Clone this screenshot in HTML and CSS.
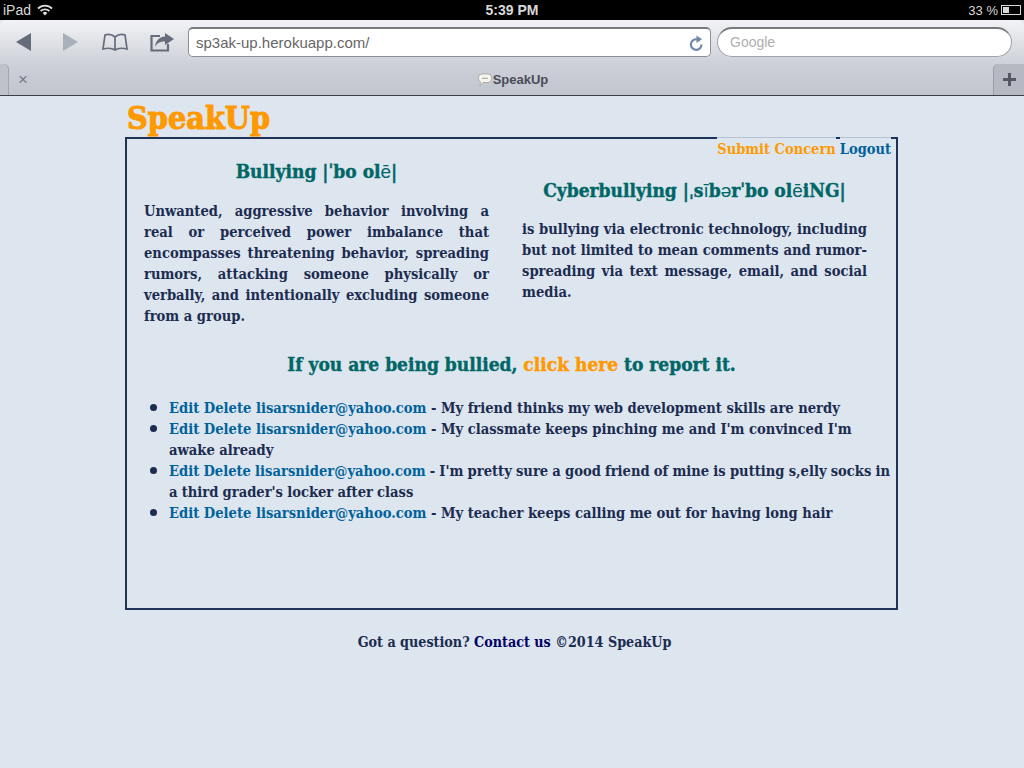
FILE: index.html
```html
<!DOCTYPE html>
<html lang="en">

<head>
    <meta charset="UTF-8">
    <meta name="viewport" content="width=device-width, initial-scale=1.0">
    <title>SpeakUp</title>

    <link rel="stylesheet" href="styles.css">
</head>

<body>

    <div class="status-bar">
        <div class="status-left">
            <span>iPad</span>
            <svg class="wifi" width="16" height="12" viewBox="0 0 16 12">
                <path d="M1 4.500 A10 10 0 0 1 15 4.500" fill="none" stroke="#ddd" stroke-width="1.800"/>
                <path d="M3.600 7 A6.500 6.500 0 0 1 12.400 7" fill="none" stroke="#ddd" stroke-width="1.800"/>
                <path d="M8 11.500 L5.700 9 A3.200 3.200 0 0 1 10.300 9 Z" fill="#ddd"/>
            </svg>
        </div>
        <div class="status-time">5:39 PM</div>
        <div class="status-right">
            <span>33 %</span>
            <span class="battery"><span class="battery-level"></span></span>
        </div>
    </div>

    <div class="toolbar">
        <svg class="tool-icon back" width="16" height="18" viewBox="0 0 16 18"><path d="M15 0 V18 L0 9 Z" fill="#656c7a"/></svg>
        <svg class="tool-icon forward" width="16" height="18" viewBox="0 0 16 18"><path d="M1 0 V18 L16 9 Z" fill="#a9afbb"/></svg>
        <svg class="tool-icon book" width="26" height="18" viewBox="0 0 26 18">
            <path d="M13 4 C10 1.500 6 1 3 2 L1 16 C5 15 10 15 13 17 C16 15 21 15 25 16 L23 2 C20 1 16 1.500 13 4 Z M13 4 V17" fill="none" stroke="#656c7a" stroke-width="1.700"/>
        </svg>
        <svg class="tool-icon share" width="24" height="19" viewBox="0 0 24 19">
            <path d="M10 3 H1.500 V17.500 H18 V11" fill="none" stroke="#656c7a" stroke-width="2.200"/>
            <path d="M15 0 L24 6 L15 12 V8.500 C10 8.500 7 10 5 14 C5.500 8 9 4 15 3.500 Z" fill="#656c7a"/>
        </svg>
        <div class="url-box">
            <span>sp3ak-up.herokuapp.com/</span>
            <svg width="15" height="16" viewBox="0 0 15 16">
                <path d="M12.500 9.500 A5.300 5.300 0 1 1 8 4.300" fill="none" stroke="#7088a6" stroke-width="2.200"/>
                <path d="M7.500 0.500 L13 4.300 L7.500 8 Z" fill="#7088a6"/>
            </svg>
        </div>
        <div class="search-box">Google</div>
    </div>

    <div class="tab-bar">
        <div class="tab-edge"></div>
        <span class="tab-close">&times;</span>
        <div class="tab-title">
            <svg width="14" height="14" viewBox="0 0 14 14">
                <path d="M4 1 H10 A3.500 3.500 0 0 1 13.500 4.500 V6 A3.500 3.500 0 0 1 10 9.500 H5 L2 12.500 L2.500 8.800 A3.500 3.500 0 0 1 .5 6 V4.500 A3.500 3.500 0 0 1 4 1 Z" fill="#f4f4f0" stroke="#9a9a92" stroke-width=".7"/>
                <path d="M4.500 5.300 H5.500 M6.500 5.300 H7.500 M8.500 5.300 H9.500" stroke="#444" stroke-width="1"/>
            </svg>
            <span>SpeakUp</span>
        </div>
        <div class="tab-add">
            <svg width="13" height="13" viewBox="0 0 13 13"><path d="M6.500 0 V13 M0 6.500 H13" stroke="#555863" stroke-width="3"/></svg>
        </div>
    </div>

    <div class="page">
        <h1 class="logo">SpeakUp</h1>

        <div class="box">
            <div class="nav">
                <a href="#" class="orange">Submit Concern</a>
                <a href="#">Logout</a>
            </div>

            <div class="definitions">
                <div class="definition">
                    <h2>Bullying |ˈbo ol<span class="thin">ē</span>|</h2>
                    <p>Unwanted, aggressive behavior involving a real or perceived power imbalance that encompasses threatening behavior, spreading rumors, attacking someone physically or verbally, and intentionally excluding someone from a group.</p>
                </div>
                <div class="definition second">
                    <h2>Cyberbullying |ˌs<span class="thin">ī</span>b<span class="thin">ə</span>rˈbo ol<span class="thin">ē</span>iNG|</h2>
                    <p>is bullying via electronic technology, including but not limited to mean comments and rumor-spreading via text message, email, and social media.</p>
                </div>
            </div>

            <h3 class="report">If you are being bullied, <a href="#" class="orange">click here</a> to report it.</h3>

            <ul class="concerns">
                <li><a href="#">Edit</a> <a href="#">Delete</a> <a href="#">lisarsnider@yahoo.com</a> - My friend thinks my web development skills are nerdy</li>
                <li><a href="#">Edit</a> <a href="#">Delete</a> <a href="#">lisarsnider@yahoo.com</a> - My classmate keeps pinching me and I'm convinced I'm awake already</li>
                <li class="tight"><a href="#">Edit</a> <a href="#">Delete</a> <a href="#">lisarsnider@yahoo.com</a> - I'm pretty sure a good friend of mine is putting s,elly socks in a third grader's locker after class</li>
                <li><a href="#">Edit</a> <a href="#">Delete</a> <a href="#">lisarsnider@yahoo.com</a> - My teacher keeps calling me out for having long hair</li>
            </ul>
        </div>

        <p class="footer">Got a question? <a href="#">Contact us</a> ©2014 SpeakUp</p>
    </div>

</body>

</html>
```

FILE: styles.css
```css
* {
    box-sizing: border-box;
}

body {
    margin: 0;
    height: 768px;
    overflow: hidden;
    background-color: #dde5ef;
    font-family: "DejaVu Serif Condensed", "DejaVu Serif", serif;
    font-size: 14.6px;
    font-weight: bold;
    color: #1b2c50;
}

a {
    color: #00629b;
    text-decoration: none;
}

a.orange {
    color: #ff9900;
}

/* ipad chrome */

.status-bar {
    display: grid;
    grid-template-columns: 1fr auto 1fr;
    align-items: center;
    height: 20px;
    padding: 0 3px 0 3px;
    background: #000;
    color: #d8d8d8;
    font-family: "Liberation Sans", sans-serif;
    font-size: 14px;
    font-weight: normal;
}

.status-left {
    display: flex;
    align-items: center;
    gap: 6px;
}

.status-time {
    font-weight: bold;
    font-size: 14px;
}

.status-right {
    display: flex;
    justify-content: flex-end;
    align-items: center;
    gap: 3px;
    font-size: 13px;
}

.battery {
    width: 20px;
    height: 10px;
    border: 1px solid #d8d8d8;
    padding: 1px;
}

.battery-level {
    display: block;
    width: 6px;
    height: 100%;
    background: #d8d8d8;
}

.toolbar {
    display: flex;
    align-items: center;
    height: 44px;
    padding: 0 12px 0 16px;
    border-radius: 6px 6px 0 0;
    background: linear-gradient(#f2f3f5, #cdd0d8);
}

.tool-icon {
    flex: none;
}

.forward {
    margin-left: 30px;
}

.book {
    margin-left: 24px;
}

.share {
    margin-left: 22px;
}

.url-box {
    display: flex;
    justify-content: space-between;
    align-items: center;
    width: 523px;
    height: 30px;
    margin-left: 14px;
    padding: 0 6px 0 7px;
    border: 1px solid #8a8e96;
    border-top: 2px solid #77797f;
    border-radius: 5px;
    background: #fff;
    color: #666;
    font-family: "Liberation Sans", sans-serif;
    font-size: 15px;
    font-weight: normal;
}

.search-box {
    width: 295px;
    height: 30px;
    margin-left: 6px;
    padding: 5px 12px;
    border: 1px solid #a0a3a9;
    border-top: 2px solid #77797f;
    border-radius: 15px;
    background: #fff;
    color: #b0b0b0;
    font-family: "Liberation Sans", sans-serif;
    font-size: 14px;
    font-weight: normal;
}

.tab-bar {
    display: flex;
    align-items: flex-end;
    height: 32px;
    background: linear-gradient(#cdd0d8, #c2c5ce);
    border-bottom: 1px solid #3d3f45;
}

.tab-edge {
    width: 9px;
    height: 31px;
    border-right: 1px solid #a2a5ad;
    border-top-right-radius: 5px;
    background: #bfc2ca;
}

.tab-close {
    align-self: center;
    margin-left: 9px;
    color: #777b85;
    font-family: "Liberation Sans", sans-serif;
    font-size: 17px;
    font-weight: normal;
}

.tab-title {
    flex: 1;
    display: flex;
    justify-content: center;
    align-items: center;
    gap: 1px;
    align-self: center;
    padding-left: 5px;
    color: #4a4c57;
    font-family: "Liberation Sans", sans-serif;
    font-size: 13px;
}

.tab-add {
    display: flex;
    justify-content: center;
    align-items: center;
    width: 31px;
    height: 31px;
    border-left: 1px solid #9a9da5;
    border-top-left-radius: 5px;
    background: #b6b9c2;
}

/* page */

.page {
    width: 773px;
    margin: 0 0 0 125px;
}

.logo {
    margin: 0;
    padding-left: 2px;
    height: 41px;
    color: #ff9900;
    font-size: 32px;
    line-height: 44px;
    -webkit-text-stroke: 1px #ff9900;
}

.box {
    position: relative;
    height: 473px;
    padding: 0 4px 0 17px;
    border: 2px solid #1f3358;
}

.nav {
    position: absolute;
    top: -2px;
    right: 5px;
    display: flex;
    gap: 4px;
    font-size: 14.5px;
    line-height: 21px;
}

.nav a {
    border-top: 1px solid #b4c2d4;
    background: #dde5ef;
}

.definitions {
    display: flex;
    gap: 33px;
    padding-top: 17px;
}

.definition {
    width: 345px;
}

.definition.second {
    padding-top: 19px;
}

.definition h2 {
    margin: 0 0 13px;
    color: #006666;
    font-size: 19px;
    line-height: 30px;
    text-align: center;
    -webkit-text-stroke: .4px #006666;
}

.definition.second h2 {
    margin-bottom: 12px;
}

.definition h2 .thin {
    font-family: "Liberation Sans", sans-serif;
    font-weight: normal;
    -webkit-text-stroke: 0;
}

.definition p {
    margin: 0;
    line-height: 21px;
    text-align: justify;
}

.report {
    margin: 23px 0 0;
    padding-right: 13px;
    color: #006666;
    font-size: 19px;
    line-height: 30px;
    text-align: center;
    -webkit-text-stroke: .4px #006666;
}

.report a.orange {
    -webkit-text-stroke: .4px #ff9900;
}

.concerns {
    margin: 18px -6px 0 0;
    padding-left: 25px;
    list-style: none;
    line-height: 21px;
}

.concerns li {
    position: relative;
}

.concerns li.tight {
    word-spacing: -.4px;
}

.concerns li::before {
    content: "";
    position: absolute;
    top: 7px;
    left: -19px;
    width: 7px;
    height: 7px;
    border-radius: 50%;
    background: #1b2c50;
}

.footer {
    margin: 22px 0 0;
    padding-left: 6px;
    font-size: 14.2px;
    line-height: 21px;
    text-align: center;
}

.footer a {
    color: #000066;
}
```
